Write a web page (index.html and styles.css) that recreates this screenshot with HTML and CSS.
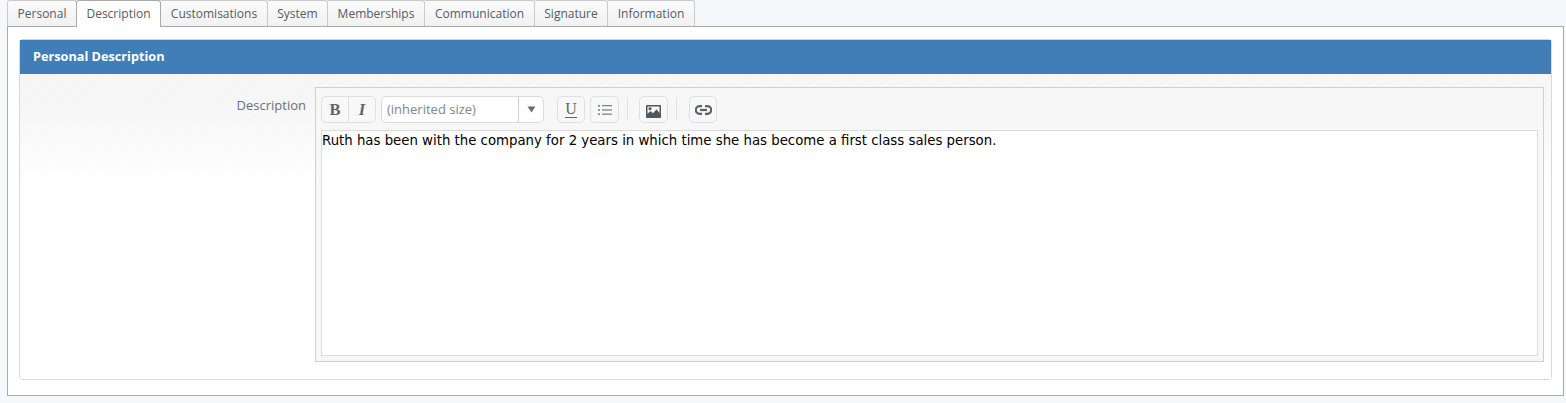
FILE: index.html
```html
<!DOCTYPE html>
<html lang="en">
<head>
<meta charset="utf-8">
<title>Personal Description</title>
<link rel="stylesheet" href="styles.css">
</head>
<body>
<div class="tabs">
  <a class="tab t1">Personal</a>
  <a class="tab t2 active">Description</a>
  <a class="tab t3">Customisations</a>
  <a class="tab t4">System</a>
  <a class="tab t5">Memberships</a>
  <a class="tab t6">Communication</a>
  <a class="tab t7">Signature</a>
  <a class="tab t8">Information</a>
</div>
<div class="panel">
  <section class="card">
    <h2 class="card-title">Personal Description</h2>
    <div class="card-body">
      <label class="field-label">Description</label>
      <div class="editor">
        <div class="toolbar">
          <div class="btn-group">
            <button class="btn btn-b"><span class="glyph-b">B</span></button>
            <button class="btn btn-i"><span class="glyph-i">I</span></button>
          </div>
          <div class="size-select">
            <span class="size-text">(inherited size)</span>
            <span class="size-arrow"><svg width="9" height="7" viewBox="0 0 9 7"><path d="M0.5 0.5h8L4.5 6.5z" fill="#666e78"/></svg></span>
          </div>
          <button class="btn btn-u"><span class="glyph-u">U</span><span class="u-line"></span></button>
          <button class="btn btn-list">
            <svg width="14" height="12" viewBox="0 0 14 12"><g fill="#7c838c"><rect x="0" y="1" width="2" height="1.6"/><rect x="0" y="5.2" width="2" height="1.6"/><rect x="0" y="9.4" width="2" height="1.6"/><rect x="4" y="1" width="10" height="1.3"/><rect x="4" y="5.3" width="10" height="1.3"/><rect x="4" y="9.5" width="10" height="1.3"/></g></svg>
          </button>
          <span class="sep sep-a"></span>
          <button class="btn btn-img">
            <svg class="icon-img" width="15" height="13" viewBox="0 0 15 14" preserveAspectRatio="none"><path fill="#4f5761" fill-rule="evenodd" d="M1 0h13a1 1 0 0 1 1 1v12a1 1 0 0 1-1 1H1a1 1 0 0 1-1-1V1a1 1 0 0 1 1-1zM1.5 9.5l3-3 2.5 2.5 3.5-4.5 3 4V1.6H1.5zM4 2.5a1.6 1.6 0 1 1 0 3.2 1.6 1.6 0 0 1 0-3.2z"/></svg>
          </button>
          <span class="sep sep-b"></span>
          <button class="btn btn-link">
            <svg width="17" height="10" viewBox="0 0 17 10"><g fill="none" stroke="#5a626c" stroke-width="2.2"><path d="M7 1.2H4.6a3.8 3.8 0 0 0 0 7.6H7"/><path d="M10 1.2h2.4a3.8 3.8 0 0 1 0 7.6H10"/><path d="M5 5h7"/></g></svg>
          </button>
        </div>
        <div class="content">Ruth has been with the company for 2 years in which time she has become a first class sales person.</div>
      </div>
    </div>
  </section>
</div>
</body>
</html>
```
FILE: styles.css
```css
* { box-sizing: border-box; }
html, body { margin: 0; padding: 0; }
body {
  width: 1566px;
  height: 403px;
  overflow: hidden;
  background: #f6f7fa;
  padding: 0 2px 0 7px;
  font-family: "Open Sans", "Liberation Sans", sans-serif;
  font-size: 12px;
  color: #555c66;
}
.tabs { display: flex; height: 27px; position: relative; z-index: 1; }
.tab {
  height: 26px;
  border: 1px solid #c9cacc;
  border-bottom: 0;
  border-left-width: 0;
  border-radius: 0 3px 0 0;
  background: linear-gradient(#fbfbfb, #f1f1f2);
  display: flex;
  align-items: center;
  justify-content: center;
  font-size: 12px;
  color: #545b64;
  padding-bottom: 1px;
}
.t1 { width: 70px; border-left-width: 1px; border-radius: 3px 3px 0 0; }
.t3 { width: 107px; }
.t4 { width: 60px; }
.t5 { width: 97px; }
.t6 { width: 110px; }
.t7 { width: 73px; }
.t8 { width: 87px; }
.tab.active {
  height: 27px;
  width: 85px;
  margin-left: -1px;
  background: #fff;
  border: 1px solid #a9aaad;
  border-bottom: 0;
  border-radius: 3px 3px 0 0;
}
.panel {
  height: 370px;
  margin-top: -1px;
  width: 1557px;
  background: #fff;
  border: 1px solid #a9aaad;
  padding: 12px 11px 15px 11px;
}
.card {
  height: 341px;
  border: 1px solid #d9d9d9;
  border-top-color: #cfd3d8;
  border-radius: 4px;
  background: #fff;
  display: flex;
  flex-direction: column;
}
.card-title {
  margin: 0;
  height: 34px;
  flex: none;
  background: #417db6;
  color: #fff;
  font-size: 12.7px;
  font-weight: 700;
  line-height: 33px;
  padding-left: 13px;
}
.card-body {
  flex: 1;
  display: flex;
  align-items: flex-start;
  padding: 13px 6px 17px 0;
  background:
    linear-gradient(rgba(255,255,255,0) 0, rgba(255,255,255,0) 30px, #fff 112px),
    repeating-linear-gradient(135deg, #f4f4f4 0 1px, #f7f7f7 1px 3px);
}
.field-label {
  width: 286px;
  flex: none;
  text-align: right;
  font-size: 13px;
  color: #6b7078;
  padding-top: 10px;
  line-height: 17px;
}
.editor {
  margin-left: 9px;
  width: 1229px;
  height: 275px;
  border: 1px solid #cfcfcf;
  background: #f7f7f7;
  padding: 0 5px 5px 5px;
  display: flex;
  flex-direction: column;
}
.toolbar {
  height: 42px;
  flex: none;
  display: flex;
  align-items: flex-start;
  padding-top: 8px;
}
.btn {
  height: 27px;
  width: 28px;
  padding: 0;
  border: 1px solid #e0e0e0;
  border-radius: 5px;
  background: #f8f8f8;
  display: flex;
  align-items: center;
  justify-content: center;
  font-family: "Liberation Serif", serif;
}
.btn-group { display: flex; }
.btn-b { border-radius: 5px 0 0 5px; width: 28px; }
.btn-i { border-radius: 0 5px 5px 0; border-left: 0; width: 27px; }
.glyph-b { font-weight: 700; font-size: 16.5px; color: #5e656e; }
.glyph-i { font-weight: 700; font-style: italic; font-size: 16.5px; color: #5e656e; }
.btn-u { flex-direction: column; gap: 0; margin-left: 13px; }
.glyph-u { font-weight: 400; font-size: 16px; line-height: 14px; color: #5e656e; }
.u-line { width: 12px; height: 1px; background: #5e656e; margin-top: 1px; }
.size-select {
  margin-left: 5px;
  width: 163px;
  height: 27px;
  border: 1px solid #dadada;
  border-radius: 5px;
  background: #fff;
  display: flex;
  align-items: stretch;
}
.size-text {
  flex: 1;
  padding-left: 5px;
  font-size: 13px;
  line-height: 25px;
  color: #80868e;
}
.size-arrow {
  width: 25px;
  border-left: 1px solid #cfcfcf;
  display: flex;
  align-items: center;
  justify-content: center;
}
.btn-list { margin-left: 5px; width: 29px; }
.sep { width: 1px; height: 24px; background: #e2e2e2; flex: none; margin-top: 1px; }
.sep-a { margin-left: 8px; }
.btn-img { margin-left: 11px; width: 29px; padding-top: 3px; }
.sep-b { margin-left: 8px; }
.btn-link { margin-left: 12px; }
.content {
  flex: 1;
  background: #fff;
  border: 1px solid #dcdcdc;
  font-family: "DejaVu Sans", Verdana, sans-serif;
  font-size: 13.3px;
  line-height: 17px;
  color: #000;
  padding: 1px 0 0 0;
  white-space: nowrap;
}
```
